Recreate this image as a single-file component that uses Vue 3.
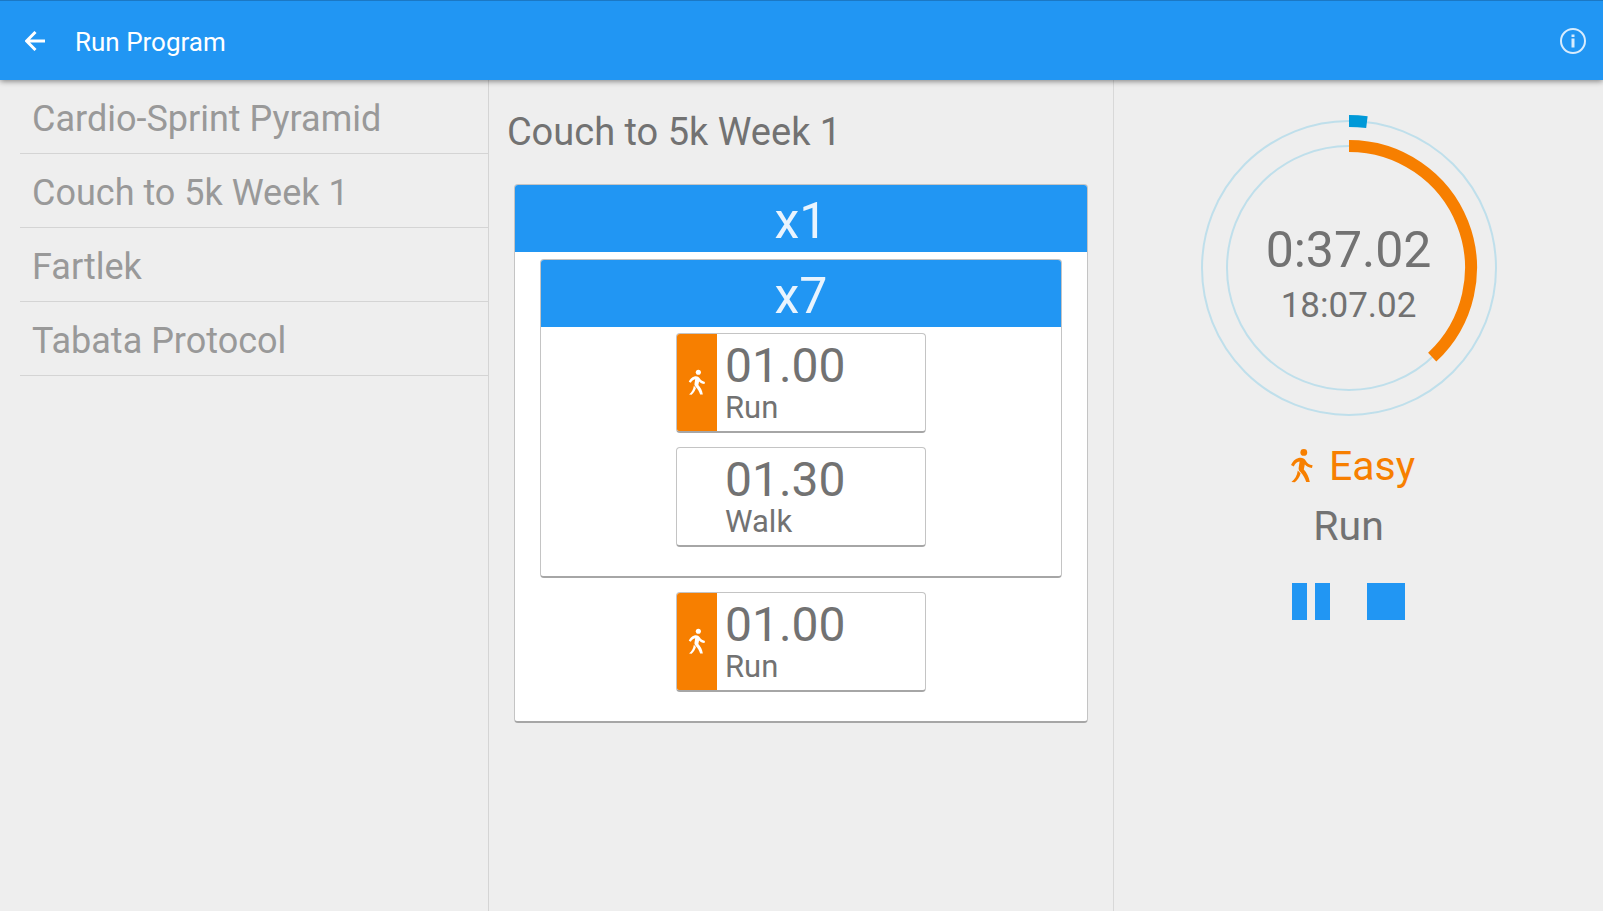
<script setup>
import { computed, h } from 'vue'

const programs = ['Cardio-Sprint Pyramid', 'Couch to 5k Week 1', 'Fartlek', 'Tabata Protocol']

const program = {
  name: 'Couch to 5k Week 1',
  repeats: 1,
  inner: {
    repeats: 7,
    intervals: [
      { time: '01.00', label: 'Run', easy: true },
      { time: '01.30', label: 'Walk', easy: false }
    ]
  },
  intervals: [{ time: '01.00', label: 'Run', easy: true }]
}

const WalkIcon = () =>
  h('svg', { viewBox: '0 0 24 36', 'aria-hidden': 'true' }, [
    h('circle', { cx: 13.8, cy: 4.4, r: 3.4, fill: 'currentColor' }),
    h('path', {
      d: 'M1 17C2.4 13.6 5 10.8 8.4 9.9C11.6 9.2 14.2 10 15.6 12.4C17 15 19 16.6 22.6 17.2L22 20C18.8 19.6 16.4 18.4 14.8 16.6L13.8 21.4C16.8 24.6 18.8 28.6 19.8 34L16.2 34C15 30 13.2 27 10.4 24C8.8 22.4 8.4 21 8.7 19.4L9.6 13.6C7 14 5 15.6 3.8 18.4ZM7.8 22.4L10.6 25.4C9.4 29.2 7.6 32.2 4.8 34.2L1.4 34C5 31 7 27.8 7.8 22.4Z',
      fill: 'currentColor'
    })
  ])

const arc = (radius, degrees) => {
  const a = (degrees * Math.PI) / 180
  const x = 155 + radius * Math.sin(a)
  const y = 155 - radius * Math.cos(a)
  return `M155 ${155 - radius}A${radius} ${radius} 0 0 1 ${x} ${y}`
}
const totalArc = computed(() => arc(147, 7))
const intervalArc = computed(() => arc(122, 137))
</script>

<template>
  <div class="app">
    <header class="bar">
      <button class="icon-button" type="button" aria-label="Back">
        <svg class="back" viewBox="0 0 20 20" aria-hidden="true">
          <path d="M20 10H2.5M10.5 1L1.5 10L10.5 19" />
        </svg>
      </button>
      <h1>Run Program</h1>
      <button class="icon-button info-button" type="button" aria-label="Info">
        <svg class="info" viewBox="0 0 26 26" aria-hidden="true">
          <circle cx="13" cy="13" r="12" />
          <path d="M13 10.5V19.5M13 6.5V9" />
        </svg>
      </button>
    </header>

    <main class="columns">
      <nav class="programs">
        <ul>
          <li v-for="name in programs" :key="name">
            <a href="#">{{ name }}</a>
          </li>
        </ul>
      </nav>

      <section class="detail">
        <h2>{{ program.name }}</h2>
        <div class="card outer">
          <div class="repeat">x{{ program.repeats }}</div>
          <div class="card inner">
            <div class="repeat">x{{ program.inner.repeats }}</div>
            <div v-for="item in program.inner.intervals" :key="item.label" class="card interval">
              <div class="effort" :class="{ easy: item.easy }"><WalkIcon v-if="item.easy" class="walk-small" /></div>
              <div class="info-text">
                <div class="time">{{ item.time }}</div>
                <div class="label">{{ item.label }}</div>
              </div>
            </div>
          </div>
          <div v-for="item in program.intervals" :key="item.label" class="card interval">
            <div class="effort" :class="{ easy: item.easy }"><WalkIcon v-if="item.easy" class="walk-small" /></div>
            <div class="info-text">
              <div class="time">{{ item.time }}</div>
              <div class="label">{{ item.label }}</div>
            </div>
          </div>
        </div>
      </section>

      <section class="runner">
        <div class="dial">
          <svg viewBox="0 0 310 310" aria-hidden="true">
            <circle class="track" cx="155" cy="155" r="147" />
            <circle class="track" cx="155" cy="155" r="122" />
            <path class="total" :d="totalArc" />
            <path class="current" :d="intervalArc" />
          </svg>
          <div class="readout">
            <div class="remaining">0:37.02</div>
            <div class="overall">18:07.02</div>
          </div>
        </div>
        <div class="effort-name"><WalkIcon class="walk-large" /><span>Easy</span></div>
        <div class="activity">Run</div>
        <div class="controls">
          <button type="button" class="pause" aria-label="Pause"></button>
          <button type="button" class="stop" aria-label="Stop"></button>
        </div>
      </section>
    </main>
  </div>
</template>

<style>
body {
  background: #eeeeee;
}
</style>

<style scoped>
.app {
  display: flex;
  flex-direction: column;
  min-height: 100vh;
  font-family: Roboto, "Liberation Sans", sans-serif;
  color: #727272;
  background: #eeeeee;
}
h1,
h2,
ul {
  margin: 0;
  padding: 0;
  font-weight: 400;
}
button {
  padding: 0;
  border: 0;
  background: none;
}
.bar {
  position: relative;
  display: flex;
  align-items: center;
  box-sizing: border-box;
  height: 80px;
  padding: 0 16px 0 21px;
  color: #ffffff;
  background: #2196f3;
  border-top: 1px solid #1b78c4;
  box-shadow: 0 1px 6px rgba(0, 0, 0, 0.5);
}
.icon-button {
  display: flex;
  align-items: center;
  justify-content: center;
  width: 28px;
  height: 48px;
}
.back {
  width: 20px;
  height: 20px;
  fill: none;
  stroke: #ffffff;
  stroke-width: 3;
}
h1 {
  flex: 1;
  margin-left: 26px;
  padding-top: 3px;
  font-size: 26px;
  line-height: 32px;
}
.info {
  width: 26px;
  height: 26px;
  fill: none;
  stroke: #d8ecfd;
  stroke-width: 2;
}
.info path {
  stroke-width: 3;
}
.columns {
  flex: 1;
  display: grid;
  grid-template-columns: 3fr 4fr 3fr;
  padding: 0 20px;
}
.programs {
  border-right: 1px solid #d4d4d4;
}
ul {
  list-style: none;
}
li {
  border-bottom: 1px solid #d4d4d4;
}
li a {
  display: block;
  padding: 5px 12px 0;
  font-size: 36px;
  line-height: 68px;
  color: #999999;
  text-decoration: none;
}
.detail {
  padding: 28px 25px 0;
  border-right: 1px solid #d8d8d8;
}
h2 {
  margin-left: -7px;
  font-size: 38px;
  line-height: 48px;
}
.card {
  box-sizing: border-box;
  background: #ffffff;
  border: 1px solid #c4c4c4;
  border-bottom: 2px solid #a6a6a6;
  border-radius: 4px;
}
.outer {
  margin-top: 28px;
  padding-bottom: 29px;
}
.inner {
  margin: 7px 25px 14px;
  padding-bottom: 29px;
}
.repeat {
  height: 67px;
  font-size: 50px;
  line-height: 73px;
  text-align: center;
  color: #e9f4fe;
  background: #2196f3;
  border-radius: 3px 3px 0 0;
}
.interval {
  display: flex;
  width: 250px;
  height: 100px;
  margin: 14px auto 0;
  overflow: hidden;
}
.repeat + .interval {
  margin-top: 6px;
}
.effort {
  display: flex;
  align-items: center;
  justify-content: center;
  width: 40px;
}
.easy {
  color: #ffffff;
  background: #f77f00;
}
.walk-small {
  width: 18px;
  height: 27px;
}
.info-text {
  padding-left: 8px;
}
.time {
  margin-top: 4px;
  font-size: 48px;
  line-height: 56px;
}
.label {
  font-size: 31px;
  line-height: 28px;
}
.runner {
  display: flex;
  flex-direction: column;
  align-items: center;
  padding-top: 33px;
}
.dial {
  display: grid;
  place-items: center;
}
.dial svg,
.readout {
  grid-area: 1 / 1;
}
.dial svg {
  width: 310px;
  height: 310px;
  fill: none;
}
.track {
  stroke: #bfdfeb;
  stroke-width: 2;
}
.total {
  stroke: #0099d8;
  stroke-width: 12;
}
.current {
  stroke: #f77f00;
  stroke-width: 12;
}
.readout {
  padding-top: 16px;
  text-align: center;
}
.remaining {
  font-size: 50px;
  line-height: 60px;
}
.overall {
  font-size: 35px;
  line-height: 52px;
}
.effort-name {
  display: flex;
  align-items: center;
  gap: 15px;
  margin-top: 13px;
  padding-left: 8px;
  font-size: 41px;
  line-height: 60px;
  color: #f77f00;
}
.walk-large {
  width: 24px;
  height: 36px;
}
.activity {
  font-size: 41px;
  line-height: 60px;
}
.controls {
  display: flex;
  gap: 37px;
  margin-top: 27px;
}
.controls button {
  box-sizing: border-box;
  width: 38px;
  height: 37px;
}
.pause {
  border: solid #2196f3;
  border-width: 0 15px;
}
.stop {
  background: #2196f3;
}
</style>
